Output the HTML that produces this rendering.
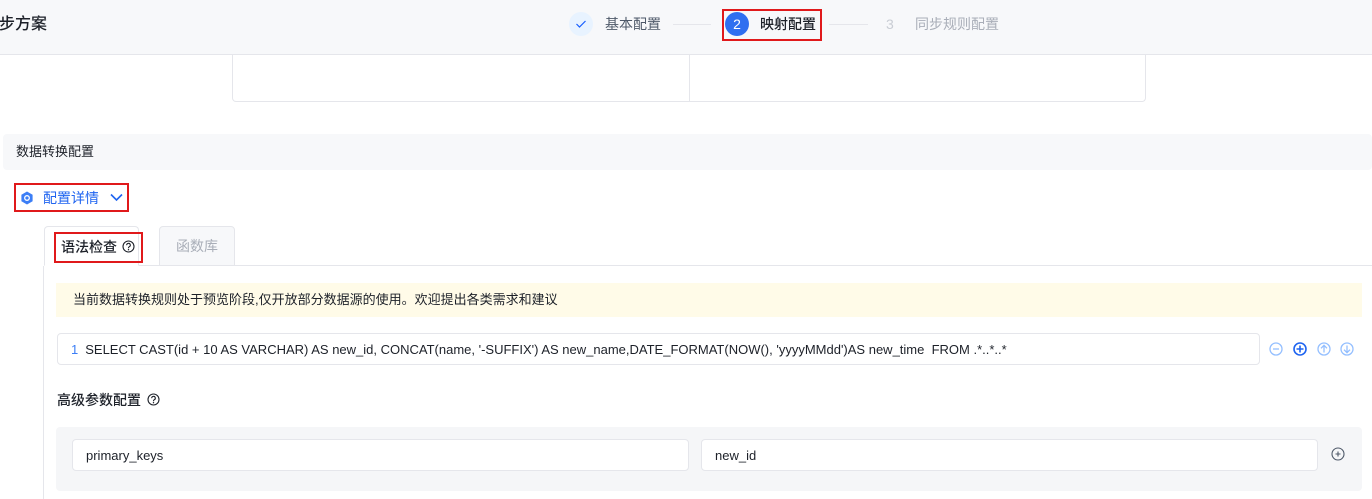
<!DOCTYPE html>
<html><head><meta charset="utf-8"><style>
*{box-sizing:border-box;margin:0;padding:0}
body{width:1372px;height:499px;overflow:hidden;background:#fff;font-family:"Liberation Sans","Noto Sans CJK SC",sans-serif;font-size:14px;color:#1d2129;position:relative}
.a{position:absolute}
.red{position:absolute;border:2px solid #e0191b}
.inp{position:absolute;border:1px solid #e5e6eb;border-radius:4px;background:#fff;font-size:13px;color:#1d2129;padding-left:13px;display:flex;align-items:center}
</style></head><body>
<div class="a" style="left:0;top:0;width:1372px;height:55px;background:#f7f8fa;border-bottom:1px solid #e5e6eb"></div>
<div class="a" style="left:-1px;top:13px;font-size:16px;font-weight:500;line-height:24px">步方案</div>
<div class="a" style="left:569px;top:12px;width:24px;height:24px;border-radius:50%;background:#e8f3ff"></div>
<svg class="a" style="left:575px;top:19px" width="12" height="10" viewBox="0 0 12 10"><path d="M1.5 5L4.5 8L10.5 2" fill="none" stroke="#165dff" stroke-width="1.2"/></svg>
<div class="a" style="left:605px;top:14px;line-height:20px;color:#4e5969">基本配置</div>
<div class="a" style="left:673px;top:24px;width:38px;height:1px;background:#e5e6eb"></div>
<div class="red" style="left:722px;top:9px;width:100px;height:32px"></div>
<div class="a" style="left:725px;top:12px;width:24px;height:24px;border-radius:50%;background:#2f6ff0;color:#fff;font-size:14px;text-align:center;line-height:24px">2</div>
<div class="a" style="left:760px;top:14px;line-height:20px;font-weight:500">映射配置</div>
<div class="a" style="left:829px;top:24px;width:39px;height:1px;background:#e5e6eb"></div>
<div class="a" style="left:886px;top:14px;line-height:20px;color:#c9cdd4">3</div>
<div class="a" style="left:915px;top:14px;line-height:20px;color:#a9aeb8">同步规则配置</div>
<div class="a" style="left:232px;top:54px;width:914px;height:48px;border:1px solid #e5e6eb;border-top:none;border-radius:0 0 4px 4px"></div>
<div class="a" style="left:689px;top:54px;width:1px;height:47px;background:#e5e6eb"></div>
<div class="a" style="left:3px;top:134px;width:1369px;height:36px;background:#f7f8fa;border-radius:4px"></div>
<div class="a" style="left:16px;top:143px;font-size:13px;line-height:18px;color:#1d2129">数据转换配置</div>
<div class="red" style="left:14px;top:183px;width:115px;height:29px"></div>
<svg class="a" style="left:20px;top:191px" width="14" height="14" viewBox="0 0 14 14"><path d="M7 0.5L12.6 3.7V10.3L7 13.5L1.4 10.3V3.7Z" fill="#3c7ef6"/><circle cx="7" cy="7" r="2.3" fill="none" stroke="#fff" stroke-width="1.3"/></svg>
<div class="a" style="left:43px;top:188px;line-height:20px;color:#1f64f0">配置详情</div>
<svg class="a" style="left:110px;top:193px" width="13" height="9" viewBox="0 0 13 9"><path d="M1 1.5L6.5 7L12 1.5" fill="none" stroke="#1f64f0" stroke-width="1.6"/></svg>
<div class="a" style="left:44px;top:265px;width:1328px;height:1px;background:#e5e6eb"></div>
<div class="a" style="left:43px;top:266px;width:1px;height:233px;background:#e5e6eb"></div>
<div class="a" style="left:44px;top:226px;width:95px;height:40px;border:1px solid #e5e6eb;border-bottom:1px solid #fff;border-radius:4px 4px 0 0;background:#fff"></div>
<div class="a" style="left:159px;top:226px;width:76px;height:40px;border:1px solid #e5e6eb;border-radius:4px 4px 0 0;background:#f7f8fa;color:#a9aeb8;text-align:center;line-height:38px">函数库</div>
<div class="red" style="left:54px;top:232px;width:89px;height:31px"></div>
<div class="a" style="left:61px;top:237px;line-height:20px;font-weight:500">语法检查</div>
<svg class="a" style="left:122px;top:240px" width="13" height="13" viewBox="0 0 13 13"><circle cx="6.5" cy="6.5" r="5.5" fill="none" stroke="#1d2129" stroke-width="1.1"/><path d="M4.7 5.2a1.8 1.8 0 1 1 2.5 1.6c-.5.3-.7.6-.7 1.1v.4" fill="none" stroke="#1d2129" stroke-width="1.1"/><circle cx="6.5" cy="9.7" r=".7" fill="#1d2129"/></svg>
<div class="a" style="left:56px;top:283px;width:1306px;height:34px;background:#fffbe8"></div>
<div class="a" style="left:73px;top:291px;line-height:18px;font-size:13px">当前数据转换规则处于预览阶段,仅开放部分数据源的使用。欢迎提出各类需求和建议</div>
<div class="inp" style="left:57px;top:333px;width:1203px;height:32px;font-size:13px;white-space:nowrap"><span style="color:#3c7ef6;margin-right:7px">1</span>SELECT CAST(id + 10 AS VARCHAR) AS new_id, CONCAT(name, '-SUFFIX') AS new_name,DATE_FORMAT(NOW(), 'yyyyMMdd')AS new_time&nbsp; FROM .*..*..*</div>
<svg class="a" style="left:1268px;top:341px" width="88" height="16" viewBox="0 0 88 16">
<g fill="none" stroke-width="1.3"><circle cx="8" cy="8" r="6" stroke="#94bfff"/><path d="M5 8h6" stroke="#94bfff"/>
<circle cx="32" cy="8" r="6" stroke="#1f64f0" stroke-width="1.6"/><path d="M28.5 8h7M32 4.5v7" stroke="#1f64f0" stroke-width="1.6"/>
<circle cx="56" cy="8" r="6" stroke="#94bfff"/><path d="M56 11.5v-7M53 7.3l3-3 3 3" stroke="#94bfff"/>
<circle cx="79" cy="8" r="6" stroke="#94bfff"/><path d="M79 4.5v7M76 8.7l3 3 3-3" stroke="#94bfff"/></g></svg>
<div class="a" style="left:57px;top:390px;line-height:20px;font-weight:500">高级参数配置</div>
<svg class="a" style="left:147px;top:393px" width="13" height="13" viewBox="0 0 13 13"><circle cx="6.5" cy="6.5" r="5.5" fill="none" stroke="#1d2129" stroke-width="1.1"/><path d="M4.7 5.2a1.8 1.8 0 1 1 2.5 1.6c-.5.3-.7.6-.7 1.1v.4" fill="none" stroke="#1d2129" stroke-width="1.1"/><circle cx="6.5" cy="9.7" r=".7" fill="#1d2129"/></svg>
<div class="a" style="left:56px;top:427px;width:1306px;height:64px;background:#f5f6f8;border-radius:4px"></div>
<div class="inp" style="left:72px;top:439px;width:617px;height:32px">primary_keys</div>
<div class="inp" style="left:701px;top:439px;width:617px;height:32px">new_id</div>
<svg class="a" style="left:1331px;top:447px" width="14" height="14" viewBox="0 0 14 14"><circle cx="7" cy="7" r="6" fill="none" stroke="#4e5969" stroke-width="1.1"/><path d="M4.5 7h5M7 4.5v5" stroke="#4e5969" stroke-width="1.1"/></svg>
</body></html>
